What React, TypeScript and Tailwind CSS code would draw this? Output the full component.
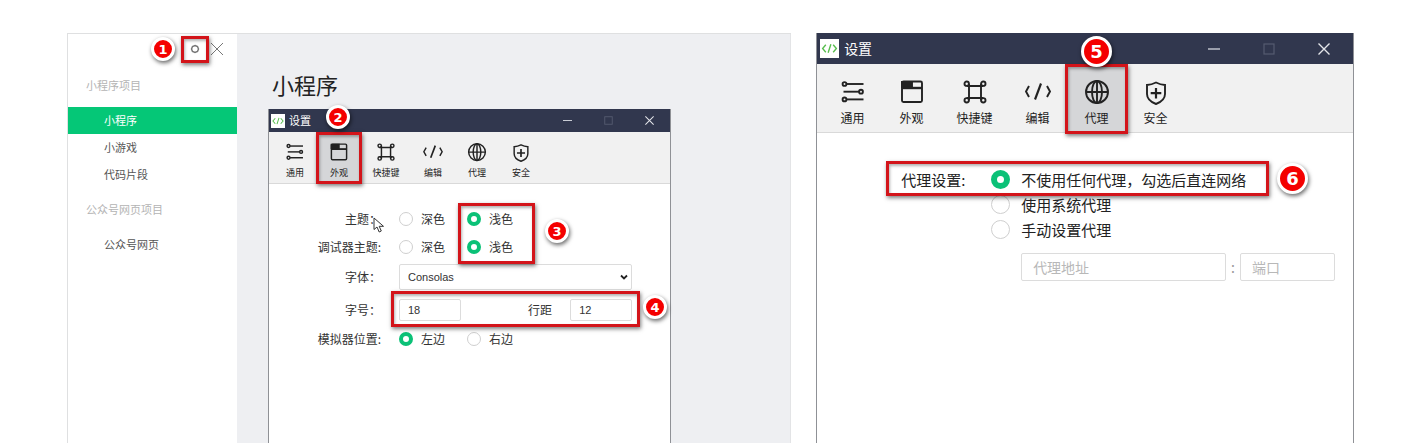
import React from "react";

type Size = "sm" | "lg";

function Frame({ className }: { className: string }) {
  return (
    <span
      aria-hidden="true"
      className={`pointer-events-none absolute z-10 border-[3px] border-[#d3141a] shadow-[1px_2px_4px_rgba(0,0,0,0.5),inset_1px_2px_3px_rgba(0,0,0,0.3)] ${className}`}
    />
  );
}

function Badge({ n, size, className }: { n: number; size: Size; className: string }) {
  const dims = size === "sm" ? "size-6 text-[13px] border-[3px]" : "size-[31px] text-[18px] border-[3px]";
  return (
    <span
      className={`absolute z-20 flex items-center justify-center rounded-full border-white bg-[#f40000] font-['DejaVu_Sans',sans-serif] leading-none font-bold text-white shadow-[1px_2px_4px_rgba(0,0,0,0.6)] ${dims} ${className}`}
    >
      {n}
    </span>
  );
}

const icons: Record<string, React.ReactNode> = {
  通用: (
    <>
      <circle cx="5.500" cy="4" r="1.900" />
      <path d="M7.500 4H24.500" />
      <path d="M4.500 11.700H20" />
      <circle cx="22" cy="11.700" r="1.900" />
      <circle cx="5.500" cy="19.400" r="1.900" />
      <path d="M7.500 19.400H24.500" />
    </>
  ),
  外观: (
    <>
      <rect x="4" y="1.500" width="20" height="20.500" rx="1.500" />
      <path d="M4 2H14V7H4Z" fill="currentColor" />
      <path d="M4 8H24" strokeWidth="2.400" />
    </>
  ),
  快捷键: (
    <>
      <path d="M8 3.700V20.300M20 3.700V20.300M5.700 6H22.300M5.700 18H22.300" />
      <circle cx="5.700" cy="3.700" r="2.200" />
      <circle cx="22.300" cy="3.700" r="2.200" />
      <circle cx="5.700" cy="20.300" r="2.200" />
      <circle cx="22.300" cy="20.300" r="2.200" />
    </>
  ),
  编辑: (
    <>
      <path d="M5 6L2 11.500L5 17" />
      <path d="M23 6L26 11.500L23 17" />
      <path d="M17 3.500L11 19.500" strokeWidth="2.200" />
    </>
  ),
  代理: (
    <>
      <circle cx="14" cy="12" r="11" />
      <ellipse cx="14" cy="12" rx="5" ry="11" />
      <path d="M3 12H25M14 1V23" />
    </>
  ),
  安全: (
    <>
      <path d="M14 2.500C17 4 20 4.800 23 5V14C23 19 18.500 22.300 14 24C9.500 22.300 5 19 5 14V5C8 4.800 11 4 14 2.500Z" />
      <path d="M14 8V18.500M8.700 13.200H19.300" strokeWidth="2.200" />
    </>
  ),
};

const tools = ["通用", "外观", "快捷键", "编辑", "代理", "安全"];

function Toolbar({ size, active, badge }: { size: Size; active: string; badge: number }) {
  const sm = size === "sm";
  return (
    <nav
      aria-label="设置分类"
      className={`flex border-b border-[#d9d9d9] bg-[#f1f1f1] ${sm ? "h-[52px] pl-1" : "h-[69px] pl-1.5"}`}
    >
      {tools.map((name) => {
        const on = name === active;
        const width = sm
          ? name === "快捷键" ? "w-[50px]" : "w-11"
          : name === "快捷键" ? "w-[67px]" : "w-[59px]";
        return (
          <div key={name} className={`relative flex ${width}`}>
            <button
              type="button"
              aria-pressed={on}
              className={`flex w-full flex-col items-center text-[#222] ${on ? "bg-[#d5d6d8]" : ""} ${
                sm ? "gap-[5px] pt-[11px] text-[9px] leading-3" : "gap-[5px] pt-4 text-[12px] leading-4"
              }`}
            >
              <svg
                viewBox="0 0 28 25"
                className={sm ? "h-[19px] w-[22px]" : "h-[25px] w-7"}
                fill="none"
                stroke="currentColor"
                strokeWidth="1.900"
                aria-hidden="true"
              >
                {icons[name]}
              </svg>
              <span>{name}</span>
            </button>
            {on && (
              <>
                <Frame className={sm ? "top-0 -right-px -bottom-px -left-px" : "top-0 -right-0.5 -bottom-0.5 -left-0.5"} />
                <Badge n={badge} size={size} className={sm ? "-top-[27px] left-[9px]" : "-top-7 left-[14px]"} />
              </>
            )}
          </div>
        );
      })}
    </nav>
  );
}

function TitleBar({ size }: { size: Size }) {
  const sm = size === "sm";
  const button = `flex h-full items-center justify-center ${sm ? "w-[41px]" : "w-[55px]"}`;
  const glyph = sm ? "size-[9px]" : "size-3";
  return (
    <header
      className={`flex items-center bg-[#31374e] text-white ${sm ? "h-[23px] pl-0.5 text-[11px]" : "h-[31px] pr-0.5 pl-[3px] text-[14px]"}`}
    >
      <svg viewBox="0 0 18 18" className={sm ? "size-3.5" : "size-[19px]"} fill="none" stroke="#58bd4e" aria-hidden="true">
        <rect width="18" height="18" fill="#fff" stroke="none" />
        <path d="M5.500 5.500L2.500 9L5.500 12.500M12.500 5.500L15.500 9L12.500 12.500M10.300 5L7.700 13" strokeWidth="1.300" />
      </svg>
      <h2 className={sm ? "ml-1" : "ml-[5px]"}>设置</h2>
      <div className="ml-auto flex h-full">
        <button type="button" aria-label="最小化" className={button}>
          <svg viewBox="0 0 12 12" className={glyph} stroke="#c9ccd5" strokeWidth="1.400">
            <path d="M0 6H12" />
          </svg>
        </button>
        <button type="button" aria-label="最大化" disabled className={button}>
          <svg viewBox="0 0 12 12" className={glyph} fill="none" stroke="#555b70" strokeWidth="1.200">
            <rect x="1" y="1" width="10" height="10" />
          </svg>
        </button>
        <button type="button" aria-label="关闭" className={button}>
          <svg viewBox="0 0 12 12" className={glyph} stroke="#e4e5ea" strokeWidth="1.400">
            <path d="M0.500 0.500L11.500 11.500M11.500 0.500L0.500 11.500" />
          </svg>
        </button>
      </div>
    </header>
  );
}

function Radio({ name, label, size, checked }: { name: string; label: string; size: Size; checked?: boolean }) {
  const sm = size === "sm";
  return (
    <label className={`flex items-center ${sm ? "w-[68px] gap-2" : "gap-[11px]"}`}>
      <input
        type="radio"
        name={name}
        defaultChecked={checked}
        className={`shrink-0 appearance-none rounded-full border border-[#cfcfcf] bg-white checked:border-[#0bc177] ${
          sm ? "size-3.5 checked:border-4" : "size-[19px] checked:border-[6px]"
        }`}
      />
      {label}
    </label>
  );
}

function Row({ label, htmlFor, className, children }: {
  label: string;
  htmlFor?: string;
  className: string;
  children: React.ReactNode;
}) {
  return (
    <div className={`flex items-center gap-[18px] ${className}`}>
      {htmlFor ? (
        <label htmlFor={htmlFor} className="w-28 shrink-0 text-right">{label}</label>
      ) : (
        <span className="w-28 shrink-0 text-right">{label}</span>
      )}
      <div className="relative flex h-full flex-1 items-center">{children}</div>
    </div>
  );
}

const field = "border border-[#dcdcdc] bg-white rounded-[2px] outline-none";
const latin = "font-['Liberation_Sans','Noto_Sans_CJK_SC',sans-serif] text-[11px]";

function AppearanceDialog() {
  return (
    <section className="mr-[119px] ml-[31px] flex flex-1 flex-col border-x border-[#8f9196] bg-white">
      <TitleBar size="sm" />
      <Toolbar size="sm" active="外观" badge={2} />
      <form className="pt-[21px] pr-[38px] text-[12px] leading-4 text-[#333]">
        <Row label="主题：" className="h-7">
          <Radio name="theme" label="深色" size="sm" />
          <div className="relative">
            <Radio name="theme" label="浅色" size="sm" checked />
            <Frame className="-top-2 -left-[9px] h-[61px] w-[77px]" />
            <Badge n={3} size="sm" className="top-2 left-[78px]" />
          </div>
          <svg viewBox="0 0 12 16" className="absolute top-3 -left-[26px] h-4 w-3" fill="#fff" stroke="#333" aria-hidden="true">
            <path d="M1 1V12.500L4 10L6.200 15L8.300 14L6.200 9.300H10.500Z" />
          </svg>
        </Row>
        <Row label="调试器主题:" className="h-7">
          <Radio name="debugger-theme" label="深色" size="sm" />
          <Radio name="debugger-theme" label="浅色" size="sm" checked />
        </Row>
        <Row label="字体：" htmlFor="font-family" className="h-8">
          <select id="font-family" className={`h-[26px] w-full appearance-none px-2 ${field} ${latin}`}>
            <option>Consolas</option>
          </select>
          <svg viewBox="0 0 8 6" className="pointer-events-none absolute right-1 h-1.5 w-2" fill="none" stroke="#222" strokeWidth="1.800" aria-hidden="true">
            <path d="M1 1.500L4 4.500L7 1.500" />
          </svg>
        </Row>
        <Row label="字号：" htmlFor="font-size" className="h-[34px]">
          <input id="font-size" defaultValue="18" className={`h-[22px] w-[62px] px-2 ${field} ${latin}`} />
          <label htmlFor="line-height" className="mr-[18px] ml-auto">行距</label>
          <input id="line-height" defaultValue="12" className={`h-[22px] w-[62px] px-2 ${field} ${latin}`} />
          <Frame className="-top-0.5 -right-2 -left-2 h-9" />
          <Badge n={4} size="sm" className="top-0.5 -right-[35px]" />
        </Row>
        <Row label="模拟器位置:" className="h-6">
          <Radio name="simulator" label="左边" size="sm" checked />
          <Radio name="simulator" label="右边" size="sm" />
        </Row>
      </form>
    </section>
  );
}

function SideItem({ label, active }: { label: string; active?: boolean }) {
  return (
    <a
      href="#"
      aria-current={active ? "page" : undefined}
      className={`flex h-[27px] items-center pl-9 ${active ? "bg-[#05c777] text-white" : "text-[#555]"}`}
    >
      {label}
    </a>
  );
}

function Launcher() {
  return (
    <div className="flex min-w-0 flex-[726] border-t border-l border-[#dfe0e1]">
      <aside className="w-[169px] shrink-0 bg-white text-[11px]">
        <div className="flex h-[30px] items-center justify-end pr-[13px]">
          <div className="relative mr-[7px] flex">
            <button type="button" aria-label="设置" className="flex size-4 items-center justify-center">
              <svg viewBox="0 0 16 16" className="size-4" fill="none" stroke="#777" strokeWidth="1.500">
                <path d="M8 4.500L10.500 5.500L11.500 8L10.500 10.500L8 11.500L5.500 10.500L4.500 8L5.500 5.500Z" />
              </svg>
            </button>
            <Frame className="-top-[5px] -left-1.5 h-[27px] w-[28px]" />
            <Badge n={1} size="sm" className="-top-1 -left-9" />
          </div>
          <button type="button" aria-label="关闭" className="flex">
            <svg viewBox="0 0 14 14" className="size-3.5" stroke="#777">
              <path d="M1 1L13 13M13 1L1 13" />
            </svg>
          </button>
        </div>
        <nav aria-label="项目" className="mt-2 flex flex-col">
          <h3 className="mb-2 flex h-[27px] items-center pl-[18px] text-[#b4b4b4]">小程序项目</h3>
          <SideItem label="小程序" active />
          <SideItem label="小游戏" />
          <SideItem label="代码片段" />
          <h3 className="my-2 flex h-[27px] items-center pl-[18px] text-[#b4b4b4]">公众号网页项目</h3>
          <SideItem label="公众号网页" />
        </nav>
      </aside>
      <main className="flex min-w-0 flex-1 flex-col border-r border-[#e3e4e6] bg-[#eeeff2]">
        <h1 className="pt-[34px] pb-[9px] pl-[35px] text-[22px] leading-8 text-[#222]">小程序</h1>
        <AppearanceDialog />
      </main>
    </div>
  );
}

function ProxyDialog() {
  return (
    <section className="flex min-w-0 flex-[538] flex-col border-x border-[#8f9196] bg-white">
      <TitleBar size="lg" />
      <Toolbar size="lg" active="代理" badge={5} />
      <form className="relative pt-[34px] pr-[18px] text-[15px] leading-[25px] text-[#222]">
        <div role="radiogroup" aria-label="代理设置" className="flex">
          <span className="w-[174px] shrink-0 pl-[84px]">代理设置:</span>
          <div className="flex flex-col">
            <Radio name="proxy" label="不使用任何代理，勾选后直连网络" size="lg" checked />
            <Radio name="proxy" label="使用系统代理" size="lg" />
            <Radio name="proxy" label="手动设置代理" size="lg" />
          </div>
        </div>
        <Frame className="top-7 left-[69px] h-[35px] w-[383px]" />
        <Badge n={6} size="lg" className="top-[30px] left-[460px]" />
        <div className="mt-[11px] flex items-center pl-[204px] text-[14px] text-[#999]">
          <input aria-label="代理地址" placeholder="代理地址" className={`h-7 min-w-0 flex-[181] px-[11px] placeholder:text-[#b8b8b8] ${field}`} />
          <span className="w-3.5 text-center">:</span>
          <input aria-label="端口" placeholder="端口" className={`h-7 min-w-0 flex-[71] px-[11px] placeholder:text-[#b8b8b8] ${field}`} />
        </div>
      </form>
    </section>
  );
}

export default function App() {
  return (
    <div
      lang="zh-CN"
      className="flex min-h-screen gap-[25px] bg-white pt-[33px] pr-[52px] pl-[67px] font-['Noto_Sans_CJK_SC',sans-serif]"
    >
      <Launcher />
      <ProxyDialog />
    </div>
  );
}
